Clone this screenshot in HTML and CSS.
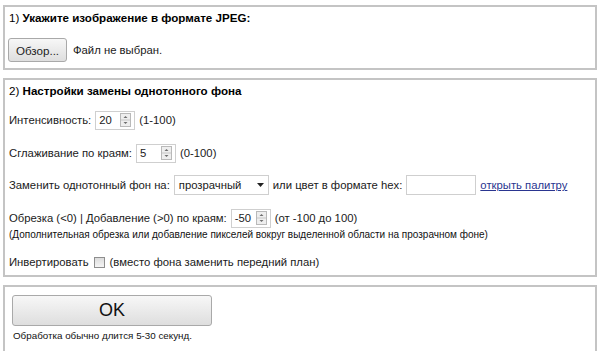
FILE: index.html
```html
<!DOCTYPE html>
<html lang="ru">
<head>
    <meta charset="UTF-8">
    <title>Замена однотонного фона</title>
    <link rel="stylesheet" href="styles.css">
</head>
<body>
    <!-- Step 1: file -->
    <div class="panel panel-file">
        <div class="title">1) <b>Укажите изображение в формате JPEG:</b></div>
        <div class="file-row">
            <button class="btn btn-browse">Обзор...</button>
            <span class="file-name">Файл не выбран.</span>
        </div>
    </div>

    <!-- Step 2: settings -->
    <div class="panel panel-settings">
        <div class="title">2) <b>Настройки замены однотонного фона</b></div>

        <div class="row row-1">
            <span>Интенсивность:</span>
            <span class="spin"><span class="spin-value">20</span><span class="spin-btns"><svg width="11" height="14" viewBox="0 0 11 14"><rect x="0.5" y="0.5" width="10" height="13" fill="#eeeeee" stroke="#b9b9b9"/><line x1="1" y1="7" x2="10" y2="7" stroke="#c6c6c6"/><path d="M3.5 5 L5.5 3 L7.5 5 Z" fill="#6d6d6d"/><path d="M3.5 9 L5.5 11 L7.5 9 Z" fill="#6d6d6d"/></svg></span></span>
            <span>(1-100)</span>
        </div>

        <div class="row row-2">
            <span>Сглаживание по краям:</span>
            <span class="spin"><span class="spin-value">5</span><span class="spin-btns"><svg width="11" height="14" viewBox="0 0 11 14"><rect x="0.5" y="0.5" width="10" height="13" fill="#eeeeee" stroke="#b9b9b9"/><line x1="1" y1="7" x2="10" y2="7" stroke="#c6c6c6"/><path d="M3.5 5 L5.5 3 L7.5 5 Z" fill="#6d6d6d"/><path d="M3.5 9 L5.5 11 L7.5 9 Z" fill="#6d6d6d"/></svg></span></span>
            <span>(0-100)</span>
        </div>

        <div class="row row-3">
            <span>Заменить однотонный фон на:</span>
            <span class="select"><span>прозрачный</span><svg width="7" height="4" viewBox="0 0 7 4"><path d="M0 0 L7 0 L3.5 4 Z" fill="#222"/></svg></span>
            <span>или цвет в формате hex:</span>
            <span class="hex-input"></span>
            <a href="#" class="palette-link">открыть палитру</a>
        </div>

        <div class="row row-4">
            <span>Обрезка (&lt;0) | Добавление (&gt;0) по краям:</span>
            <span class="spin"><span class="spin-value">-50</span><span class="spin-btns"><svg width="11" height="14" viewBox="0 0 11 14"><rect x="0.5" y="0.5" width="10" height="13" fill="#eeeeee" stroke="#b9b9b9"/><line x1="1" y1="7" x2="10" y2="7" stroke="#c6c6c6"/><path d="M3.5 5 L5.5 3 L7.5 5 Z" fill="#6d6d6d"/><path d="M3.5 9 L5.5 11 L7.5 9 Z" fill="#6d6d6d"/></svg></span></span>
            <span>(от -100 до 100)</span>
        </div>
        <div class="note">(Дополнительная обрезка или добавление пикселей вокруг выделенной области на прозрачном фоне)</div>

        <div class="row row-5">
            <span>Инвертировать</span>
            <span class="checkbox"></span>
            <span>(вместо фона заменить передний план)</span>
        </div>
    </div>

    <!-- Submit -->
    <div class="panel panel-submit">
        <button class="btn btn-ok">OK</button>
        <div class="note">Обработка обычно длится 5-30 секунд.</div>
    </div>
</body>
</html>
```

FILE: styles.css
```css
/* General */
body {
    margin: 0;
    padding: 5px 3px 0;
    background-color: #fff;
    font-family: 'Liberation Sans', Arial, sans-serif;
    font-size: 11.3px;
    color: #1a1a1a;
}

/* Panels */
.panel {
    border: 2px solid #c4c4c4;
    margin-bottom: 8px;
}

.panel-file {
    height: 58px;
    padding: 3px 4px 0;
}

.panel-settings {
    height: 192px;
    padding: 3px 4px 0;
}

.panel-submit {
    height: 57px;
    padding: 8px 7px 0;
}

.title {
    line-height: 16px;
    color: #000;
    font-size: 11.6px;
}

.title b {
    font-weight: bold;
}

/* Buttons */
.btn {
    font-family: 'Liberation Sans', Arial, sans-serif;
    color: #222;
    background: linear-gradient(#f7f7f7, #dedede);
    border: 1px solid #a9a9a9;
    border-radius: 3px;
    padding: 0;
}

.file-row {
    display: flex;
    align-items: center;
    margin-top: 12px;
}

.btn-browse {
    width: 59px;
    height: 24px;
    font-size: 11.6px;
    margin-left: -1px;
}

.file-name {
    margin-left: 6px;
}

.btn-ok {
    display: block;
    width: 200px;
    height: 31px;
    font-size: 18px;
    color: #111;
}

/* Rows */
.row {
    display: flex;
    align-items: center;
    height: 20px;
    gap: 4px;
    white-space: nowrap;
}

.row > * {
    flex-shrink: 0;
}

.row-1 { margin-top: 11px; }
.row-2 { margin-top: 13px; }
.row-3 { margin-top: 12px; }
.row-4 { margin-top: 13px; }
.row-5 { margin-top: 11px; }

.note {
    font-size: 10px;
    line-height: 12px;
    margin-top: 1px;
    color: #111;
    white-space: nowrap;
}

.panel-submit .note {
    margin-top: 4px;
    padding-left: 1px;
    font-size: 9.8px;
}

/* Fake inputs */
.spin {
    display: flex;
    align-items: center;
    justify-content: space-between;
    width: 40px;
    height: 19px;
    box-sizing: border-box;
    border: 1px solid #cfcfcf;
    padding: 0 3px 0 3px;
}

.spin-btns {
    display: flex;
}

.select {
    display: flex;
    align-items: center;
    justify-content: space-between;
    width: 95px;
    height: 20px;
    box-sizing: border-box;
    border: 1px solid #cfcfcf;
    padding: 0 4px 0 4px;
}

.hex-input {
    width: 70px;
    height: 20px;
    box-sizing: border-box;
    border: 1px solid #cfcfcf;
}

.palette-link {
    color: #2a3590;
    text-decoration: underline;
}

.checkbox {
    width: 11px;
    height: 11px;
    box-sizing: border-box;
    border: 1px solid #8e8e8e;
    background: linear-gradient(#dcdcdc, #f5f5f5);
    margin: 0 1px;
}
```
